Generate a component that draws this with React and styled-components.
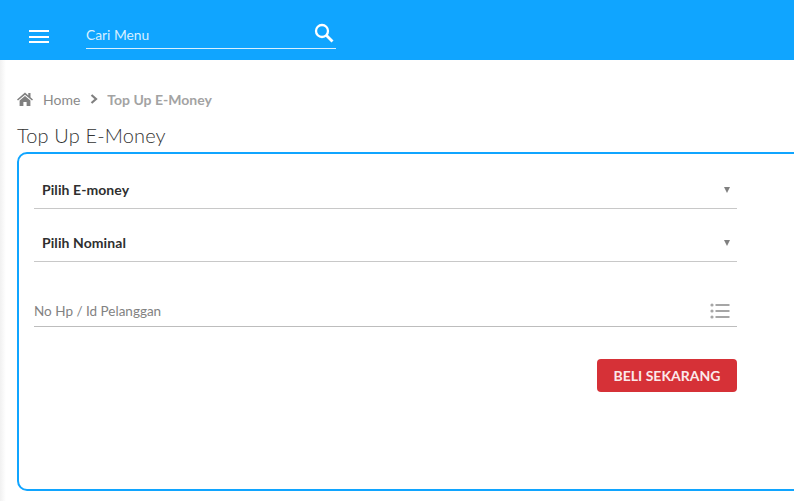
import React from 'react';
import styled, { createGlobalStyle } from 'styled-components';

const GlobalStyle = createGlobalStyle`
  html, body {
    margin: 0;
    padding: 0;
    height: 100%;
    overflow: hidden;
    background: #fff;
    font-family: 'Lato', 'Open Sans', sans-serif;
  }
  #root {
    height: 100%;
  }
`;

const Page = styled.div`
  position: relative;
  width: 794px;
  height: 501px;
  overflow: hidden;
  &::before {
    content: '';
    position: absolute;
    left: 0;
    top: 60px;
    bottom: 0;
    width: 6px;
    background: linear-gradient(to right, #f1f1f1, #ffffff);
  }
`;

const TopBar = styled.header`
  height: 60px;
  box-sizing: border-box;
  background: #10a5ff;
  display: flex;
  align-items: flex-start;
  padding: 24px 0 0 29px;
`;

const MenuButton = styled.div`
  width: 20px;
  height: 13px;
  margin-top: 6px;
  display: flex;
  flex-direction: column;
  justify-content: space-between;
  span {
    display: block;
    height: 2px;
    background: #fff;
  }
`;

const SearchBox = styled.div`
  width: 250px;
  height: 25px;
  box-sizing: border-box;
  margin-left: 37px;
  border-bottom: 1px solid #d9f0ff;
  display: flex;
  justify-content: space-between;
  align-items: flex-start;
`;

const SearchLabel = styled.span`
  font-size: 13.8px;
  line-height: 22px;
  color: #d8f0ff;
`;

const SearchIcon = styled.svg`
  width: 20px;
  height: 20px;
  margin: -1px 2px 0 0;
`;

const Content = styled.main`
  padding: 29px 0 0 17px;
`;

const Breadcrumb = styled.nav`
  display: flex;
  align-items: center;
  height: 20px;
  font-size: 14px;
  color: #8a8a8a;
`;

const HomeIcon = styled.svg`
  width: 16px;
  height: 14px;
  margin-right: 10px;
`;

const Chevron = styled.svg`
  width: 8px;
  height: 10px;
  margin: 0 9px 0 10px;
`;

const Current = styled.span`
  font-weight: 700;
  color: #a3a3a3;
`;

const Title = styled.h1`
  margin: 15px 0 0;
  font-size: 20px;
  line-height: 22px;
  font-weight: 300;
  letter-spacing: 0.15px;
  color: #333;
`;

const Card = styled.section`
  width: 800px;
  height: 339px;
  box-sizing: border-box;
  margin-top: 6px;
  border: 2px solid #10a5ff;
  border-radius: 10px;
  padding: 0 0 0 15px;
`;

const Field = styled.div`
  width: 703px;
  height: ${(p) => p.$height}px;
  box-sizing: border-box;
  border-bottom: 1px solid ${(p) => (p.$dark ? '#bdbdbd' : '#c8c8c8')};
  display: flex;
  align-items: flex-end;
  justify-content: space-between;
`;

const SelectLabel = styled.span`
  font-size: 14px;
  line-height: 18px;
  font-weight: 700;
  letter-spacing: 0.08px;
  color: #2f2f2f;
  padding: 0 0 9px 8px;
`;

const Caret = styled.span`
  width: 0;
  height: 0;
  margin: 0 7px 15px 0;
  border-left: 3.5px solid transparent;
  border-right: 3.5px solid transparent;
  border-top: 6px solid #808080;
`;

const InputRow = styled(Field)`
  padding-bottom: 6px;
`;

const Placeholder = styled.span`
  font-size: 13.5px;
  line-height: 18px;
  color: #828282;
`;

const ListIcon = styled.svg`
  width: 20px;
  height: 16px;
  margin: 0 7px 1px 0;
`;

const Actions = styled.div`
  width: 703px;
  display: flex;
  justify-content: flex-end;
  margin-top: 32px;
`;

const BuyButton = styled.button`
  width: 140px;
  height: 33px;
  padding: 0;
  border: 0;
  border-radius: 4px;
  background: #d63137;
  color: #fbe9ea;
  font-family: inherit;
  font-size: 14px;
  font-weight: 700;
`;

const App = () => (
  <Page>
    <GlobalStyle />
    <TopBar>
      <MenuButton>
        <span />
        <span />
        <span />
      </MenuButton>
      <SearchBox>
        <SearchLabel>Cari Menu</SearchLabel>
        <SearchIcon viewBox="0 0 20 20" fill="none" stroke="#fff">
          <circle cx="8" cy="8" r="6" strokeWidth="2.3" />
          <path d="M12.5 12.5 L18.5 18.5" strokeWidth="2.8" />
        </SearchIcon>
      </SearchBox>
    </TopBar>
    <Content>
      <Breadcrumb>
        <HomeIcon viewBox="0 0 16 14" fill="#808080">
          <path d="M8 0.6 L0 7.4 L1 8.6 L8 2.7 L15 8.6 L16 7.4 L13.5 5.3 V1 H11.3 V3.4 Z" />
          <path d="M8 4 L2.6 8.6 V14 H6.4 V10 H9.6 V14 H13.4 V8.6 Z" />
        </HomeIcon>
        <span>Home</span>
        <Chevron viewBox="0 0 8 10" fill="none" stroke="#808080" strokeWidth="2.2">
          <path d="M1.5 1 L6 5 L1.5 9" />
        </Chevron>
        <Current>Top Up E-Money</Current>
      </Breadcrumb>
      <Title>Top Up E-Money</Title>
      <Card>
        <Field $height={55}>
          <SelectLabel>Pilih E-money</SelectLabel>
          <Caret />
        </Field>
        <Field $height={53}>
          <SelectLabel>Pilih Nominal</SelectLabel>
          <Caret />
        </Field>
        <InputRow $height={65} $dark>
          <Placeholder>No Hp / Id Pelanggan</Placeholder>
          <ListIcon viewBox="0 0 20 16" fill="#a6a6a6">
            <circle cx="2" cy="2" r="1.6" />
            <circle cx="2" cy="8" r="1.6" />
            <circle cx="2" cy="14" r="1.6" />
            <rect x="5.5" y="1" width="14" height="2" />
            <rect x="5.5" y="7" width="14" height="2" />
            <rect x="5.5" y="13" width="14" height="2" />
          </ListIcon>
        </InputRow>
        <Actions>
          <BuyButton>BELI SEKARANG</BuyButton>
        </Actions>
      </Card>
    </Content>
  </Page>
);

export default App;
